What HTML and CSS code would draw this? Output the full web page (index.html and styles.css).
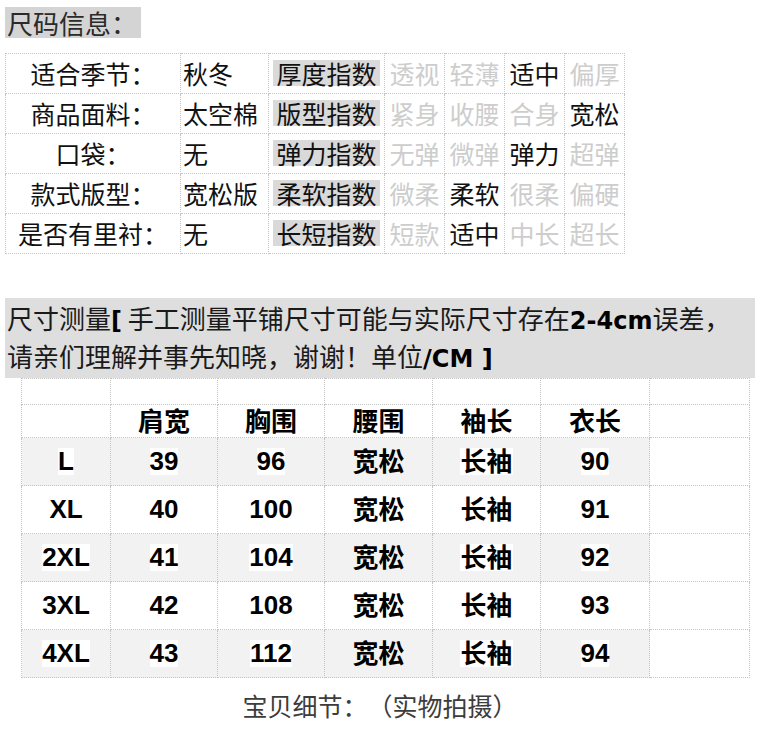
FILE: index.html
```html
<!DOCTYPE html>
<html lang="zh">
<head>
<meta charset="utf-8">
<title>尺码信息</title>
<link rel="stylesheet" href="styles.css">
</head>
<body>
<div class="title"><span class="title-text">尺码信息：</span></div>

<table class="info">
  <colgroup>
    <col class="c1"><col class="c2"><col class="c3"><col class="c4"><col class="c4"><col class="c4"><col class="c4">
  </colgroup>
  <tr><td class="label">适合季节：</td><td class="val">秋冬</td><td class="idx"><span class="hl">厚度指数</span></td><td class="off">透视</td><td class="off">轻薄</td><td class="on">适中</td><td class="off">偏厚</td></tr>
  <tr><td class="label">商品面料：</td><td class="val">太空棉</td><td class="idx"><span class="hl">版型指数</span></td><td class="off">紧身</td><td class="off">收腰</td><td class="off">合身</td><td class="on">宽松</td></tr>
  <tr><td class="label">口袋：</td><td class="val">无</td><td class="idx"><span class="hl">弹力指数</span></td><td class="off">无弹</td><td class="off">微弹</td><td class="on">弹力</td><td class="off">超弹</td></tr>
  <tr><td class="label">款式版型：</td><td class="val">宽松版</td><td class="idx"><span class="hl">柔软指数</span></td><td class="off">微柔</td><td class="on">柔软</td><td class="off">很柔</td><td class="off">偏硬</td></tr>
  <tr><td class="label">是否有里衬：</td><td class="val">无</td><td class="idx"><span class="hl">长短指数</span></td><td class="off">短款</td><td class="on">适中</td><td class="off">中长</td><td class="off">超长</td></tr>
</table>

<div class="measure">
  <div class="measure-line">尺寸测量<b class="lat">[</b> 手工测量平铺尺寸可能与实际尺寸存在<b class="lat">2-4cm</b>误差，</div>
  <div class="measure-line">请亲们理解并事先知晓，谢谢！单位<b class="lat">/CM ]</b></div>
</div>

<table class="size">
  <colgroup>
    <col class="s1"><col class="s2"><col class="s2"><col class="s3"><col class="s3"><col class="s4"><col class="s5">
  </colgroup>
  <tr class="blank"><td></td><td></td><td></td><td></td><td></td><td></td><td></td></tr>
  <tr class="head"><td></td><td><span class="t cjk">肩宽</span></td><td><span class="t cjk">胸围</span></td><td><span class="t cjk">腰围</span></td><td><span class="t cjk">袖长</span></td><td><span class="t cjk">衣长</span></td><td class="last"></td></tr>
  <tr class="row alt"><td><span class="t w">L</span></td><td><span class="t w">39</span></td><td><span class="t w">96</span></td><td><span class="t cjk">宽松</span></td><td><span class="t cjk w">长袖</span></td><td><span class="t w">90</span></td><td class="last"></td></tr>
  <tr class="row"><td><span class="t">XL</span></td><td><span class="t">40</span></td><td><span class="t">100</span></td><td><span class="t cjk">宽松</span></td><td><span class="t cjk">长袖</span></td><td><span class="t">91</span></td><td class="last"></td></tr>
  <tr class="row alt"><td><span class="t w">2XL</span></td><td><span class="t w">41</span></td><td><span class="t w">104</span></td><td><span class="t cjk">宽松</span></td><td><span class="t cjk w">长袖</span></td><td><span class="t w">92</span></td><td class="last"></td></tr>
  <tr class="row"><td><span class="t">3XL</span></td><td><span class="t">42</span></td><td><span class="t">108</span></td><td><span class="t cjk">宽松</span></td><td><span class="t cjk">长袖</span></td><td><span class="t">93</span></td><td class="last"></td></tr>
  <tr class="row alt"><td><span class="t w">4XL</span></td><td><span class="t w">43</span></td><td><span class="t w">112</span></td><td><span class="t cjk">宽松</span></td><td><span class="t cjk w">长袖</span></td><td><span class="t w">94</span></td><td class="last"></td></tr>
</table>

<div class="footer">宝贝细节：（实物拍摄）</div>
</body>
</html>
```
FILE: styles.css
```css
html, body {
  margin: 0;
  padding: 0;
  background: #ffffff;
}
body {
  font-family: "Noto Sans CJK SC", "Noto Sans", sans-serif;
  color: #111;
  width: 766px;
  text-spacing-trim: space-all;
}
.title {
  padding: 7px 0 0 5px;
  height: 31px;
}
.title-text {
  display: inline-block;
  height: 31px;
  line-height: 31px;
  font-size: 26px;
  background: #d4d4d4;
  color: #2a2a2a;
  padding: 0 4px 0 2px;
}

/* info table */
.info {
  margin: 15px 0 0 5px;
  border-collapse: collapse;
  table-layout: fixed;
  width: 620px;
  font-size: 25px;
}
.info .c1 { width: 175px; }
.info .c2 { width: 88px; }
.info .c3 { width: 116px; }
.info .c4 { width: 60px; }
.info td {
  height: 39px;
  padding: 0;
  border: 1px dotted #c4c4c4;
  line-height: 39px;
  white-space: nowrap;
  overflow: hidden;
}
.info .label { text-align: center; color: #111; }
.info .val { text-align: left; padding-left: 2px; color: #111; }
.info .idx { text-align: center; }
.info .hl {
  display: inline-block;
  background: #d9d9d9;
  line-height: 26px;
  height: 26px;
  padding: 0 3px;
  color: #111;
}
.info .off { text-align: center; color: #cdcdcd; }
.info .on { text-align: center; color: #111; }

/* measure header */
.measure {
  margin: 44px 0 0 5px;
  width: 750px;
  height: 80px;
  background: #dedede;
  box-sizing: border-box;
  padding: 1px 0 0 2px;
}
.measure-line {
  height: 38px;
  line-height: 38px;
  font-size: 26px;
  color: #1a1a1a;
  white-space: nowrap;
}
.measure .lat {
  font-family: "DejaVu Sans", "Liberation Sans", sans-serif;
  font-weight: bold;
  font-size: 24px;
  color: #000;
}

/* size table */
.size {
  margin: 0 0 0 21px;
  border-collapse: collapse;
  table-layout: fixed;
  width: 728px;
  font-family: "Liberation Sans", "Noto Sans CJK SC", sans-serif;
  font-weight: bold;
  font-size: 26px;
  color: #000;
}
.size .s1 { width: 89px; }
.size .s2 { width: 107px; }
.size .s3 { width: 108px; }
.size .s4 { width: 109px; }
.size .s5 { width: 100px; }
.size td {
  padding: 0;
  border: 1px dotted #c4c4c4;
  text-align: center;
  vertical-align: middle;
  white-space: nowrap;
  line-height: 27px;
}
.size .blank td { height: 25px; }
.size .head td { height: 32px; }
.size .row td { height: 47px; }
.size .t {
  display: inline-block;
  line-height: 27px;
  height: 27px;
  vertical-align: top;
}
.size .cjk {
  font-family: "Noto Sans CJK SC", sans-serif;
  line-height: 23px;
}
.size .alt td { background: #f2f2f2; }
.size .alt td.last { background: #ffffff; }
.size .w { background: #ffffff; }

.footer {
  text-align: center;
  font-size: 25px;
  color: #3c3c3c;
  line-height: 28px;
  padding-top: 13px;
  padding-right: 6px;
}
```
